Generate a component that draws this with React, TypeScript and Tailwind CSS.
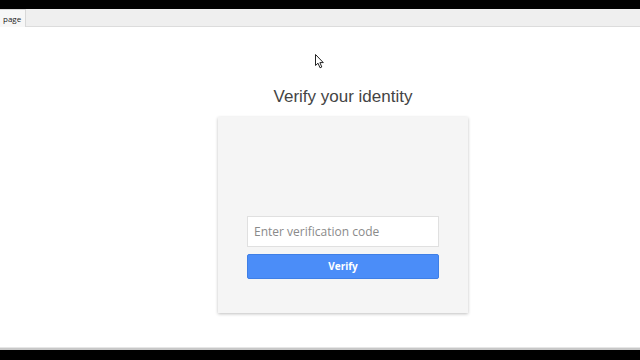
import React from 'react';

const Cursor: React.FC = () => (
  <svg className="absolute left-[315px] top-[54px]" width="10" height="15" viewBox="0 0 10 15">
    <path d="M0.5 0.5 L0.5 11.5 L3 9.2 L5 13.8 L6.8 13 L4.9 8.6 L8.3 8.6 Z" fill="#fff" stroke="#222" strokeWidth="1" strokeLinejoin="round" />
  </svg>
);

const App: React.FC = () => {
  return (
    <div className="relative w-[640px] h-[360px] overflow-hidden bg-white flex flex-col font-['Liberation_Sans',Arial,sans-serif]">
      <div className="h-[9px] bg-black shrink-0" />
      <div className="h-[18px] bg-[#efefef] border-b border-[#dcdcdc] flex items-end shrink-0">
        <div className="h-[18px] w-[26px] bg-[#f7f7f7] border-r border-t border-[#d8d8d8] -mb-px text-[8px] text-[#222] pl-[3px] leading-[17px] font-['Open_Sans',sans-serif]">
          page
        </div>
      </div>

      <div className="flex-1 flex flex-col items-center pt-[60px]">
        <h1 className="text-[17px] text-[#444] leading-[20px] ml-[46px]">Verify your identity</h1>
        <div className="mt-[10px] ml-[46px] w-[250px] h-[196px] bg-[#f5f5f5] shadow-[0_1px_3px_rgba(0,0,0,0.25)] flex flex-col items-center justify-end pb-[34px]">
          <div className="w-[192px] h-[31px] bg-white border border-[#e0e0e0] flex items-center px-[6px] text-[12px] text-[#8a8a8a] font-['Open_Sans',sans-serif]">
            Enter verification code
          </div>
          <button className="mt-[7px] w-[192px] h-[25px] bg-[#4b8df8] rounded-[2px] border border-[#3f7fe6] text-white text-[10px] font-bold font-['Open_Sans',sans-serif]">
            Verify
          </button>
        </div>
      </div>

      <div className="h-[3px] bg-[#c8c8c8] border-t border-[#e6e6e6] shrink-0" />
      <div className="h-[10px] bg-black shrink-0" />
      <Cursor />
    </div>
  );
};

export default App;
